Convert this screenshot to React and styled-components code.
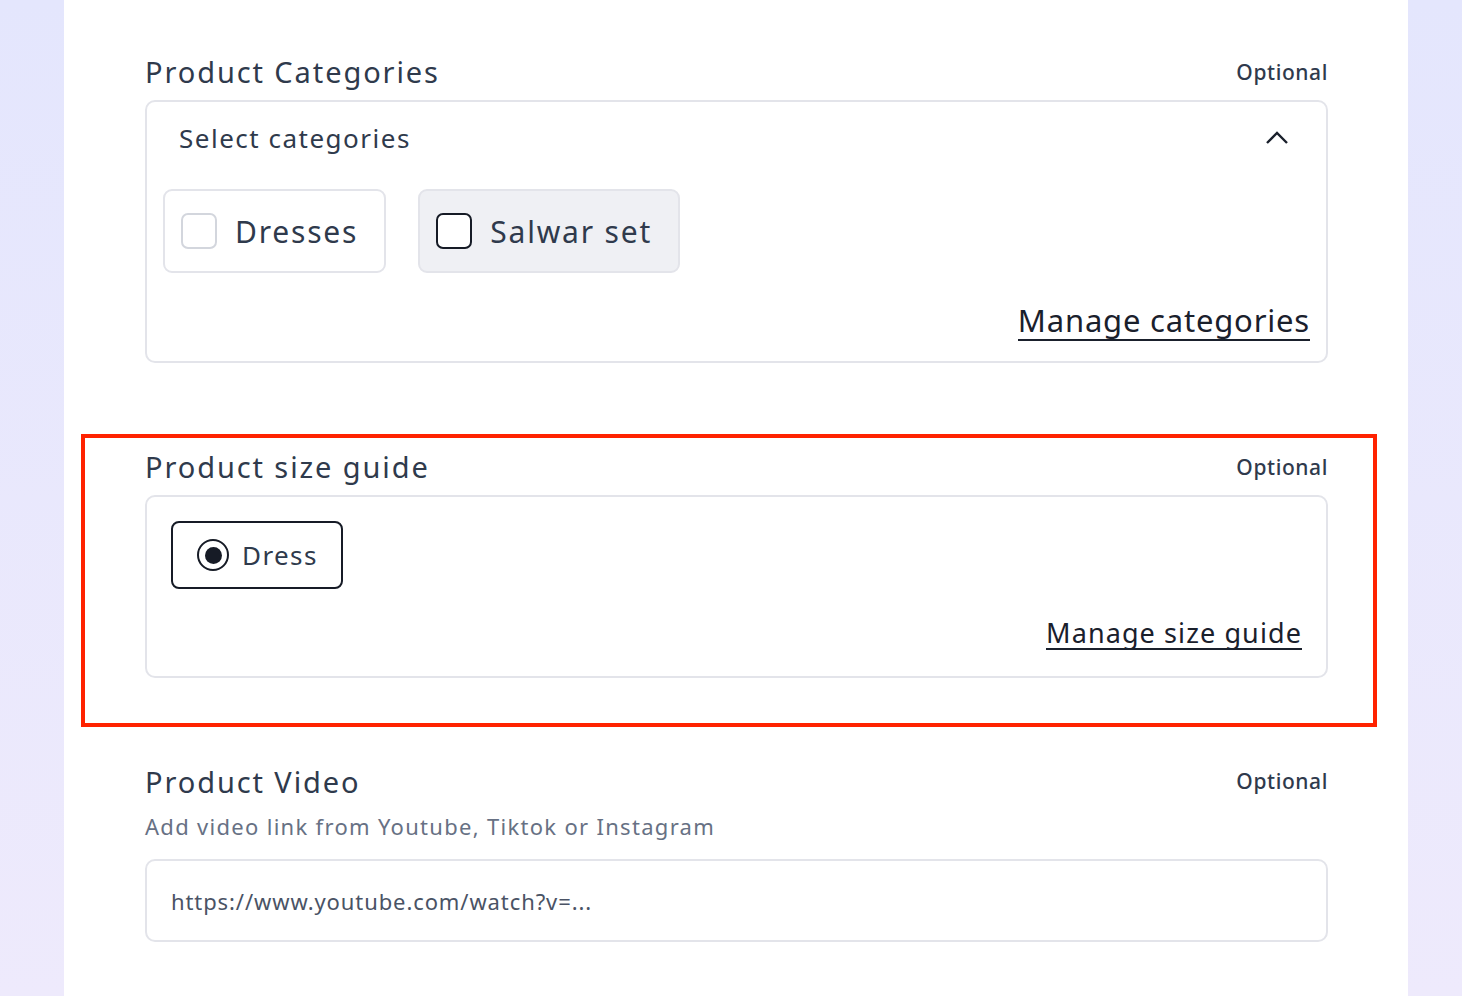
import React from "react";
import styled, { createGlobalStyle } from "styled-components";

const Global = createGlobalStyle`
  html, body { margin:0; padding:0; }
  body { font-family: "Noto Sans", "Open Sans", sans-serif; background: linear-gradient(#e4e6fd, #eeeafc); height:996px; overflow:hidden; }
`;
const Page = styled.div`width:1344px;margin-left:64px;height:996px;background:#fff;position:relative;padding:0 80px 0 81px;box-sizing:border-box;`;
const Section = styled.section`padding-top:${p=>p.$top}px;`;
const Head = styled.div`display:flex;justify-content:space-between;align-items:center;height:${p=>p.$h||56}px;color:#2d3748;`;
const Title = styled.h2`margin:0;font-weight:400;font-size:29px;letter-spacing:1.9px;color:#2f3a4c;`;
const Opt = styled.span`font-size:21px;font-weight:500;color:#2f3a4c;letter-spacing:0.6px;`;
const Box = styled.div`border:2px solid #e3e4ea;border-radius:10px;height:${p=>p.$h}px;box-sizing:border-box;position:relative;display:flex;flex-direction:column;padding:${p=>p.$pad};`;
const SelHead = styled.div`display:flex;justify-content:space-between;align-items:center;font-size:26px;color:#2f3a4c;letter-spacing:1.5px;padding:0 20px 0 16px;height:72px;margin-bottom:15px;`;
const Chips = styled.div`display:flex;gap:32px;`;
const Chip = styled.label`display:flex;align-items:center;gap:18px;height:84px;box-sizing:border-box;padding:0 26px 0 16px;border:2px solid #e3e4ea;border-radius:9px;background:${p=>p.$bg||"#fff"};font-size:30px;color:#2f3a4c;letter-spacing:1.8px;`;
const Check = styled.span`width:36px;height:36px;box-sizing:border-box;border-radius:7px;border:2px solid ${p=>p.$c};background:#fff;`;
const Link = styled.a`align-self:flex-end;margin-top:auto;color:#1a202c;font-size:${p=>p.$fs}px;letter-spacing:${p=>p.$ls}px;text-decoration:none;border-bottom:2px solid #1a202c;line-height:1.15;`;
const Radio = styled.label`display:flex;align-items:center;gap:13px;width:172px;height:68px;box-sizing:border-box;border:2px solid #161b26;border-radius:8px;padding-left:24px;font-size:26px;color:#2f3a4c;letter-spacing:1.4px;`;
const Dot = styled.span`width:32px;height:32px;box-sizing:border-box;border:2px solid #161b26;border-radius:50%;display:flex;align-items:center;justify-content:center;&::after{content:"";width:17px;height:17px;border-radius:50%;background:#161b26;}`;
const Sub = styled.p`margin:0 0 18px;font-size:22px;color:#677184;letter-spacing:1.3px;`;
const Input = styled.div`border:2px solid #e3e4ea;border-radius:10px;height:83px;box-sizing:border-box;display:flex;align-items:center;padding-left:24px;font-size:22px;color:#4a5365;letter-spacing:0.9px;`;
const Mark = styled.div`position:absolute;left:17px;top:434px;width:1296px;height:293px;box-sizing:border-box;border:4px solid #ff2200;`;

export default function App(){
  return (<>
    <Global/>
    <Page>
      <Section $top={43}>
        <Head $h={57}><Title>Product Categories</Title><Opt>Optional</Opt></Head>
        <Box $h={263} $pad="0 16px 20px 16px">
          <SelHead>Select categories
            <svg width="26" height="16" viewBox="0 0 26 16"><path d="M3 13 L13 3 L23 13" fill="none" stroke="#1a202c" strokeWidth="2.4"/></svg>
          </SelHead>
          <Chips>
            <Chip><Check $c="#d3d6dd"/>Dresses</Chip>
            <Chip $bg="#eff0f4"><Check $c="#161b26"/>Salwar set</Chip>
          </Chips>
          <Link $fs={31} $ls={0.8}>Manage categories</Link>
        </Box>
      </Section>
      <Section $top={75}>
        <Head $h={57}><Title>Product size guide</Title><Opt>Optional</Opt></Head>
        <Box $h={183} $pad="24px 24px 26px 24px">
          <Radio><Dot/>Dress</Radio>
          <Link $fs={27} $ls={1.1}>Manage size guide</Link>
        </Box>
      </Section>
      <Section $top={73}>
        <Head $h={60}><Title>Product Video</Title><Opt>Optional</Opt></Head>
        <Sub>Add video link from Youtube, Tiktok or Instagram</Sub>
        <Input>https://www.youtube.com/watch?v=...</Input>
      </Section>
      <Mark/>
    </Page>
  </>);
}
